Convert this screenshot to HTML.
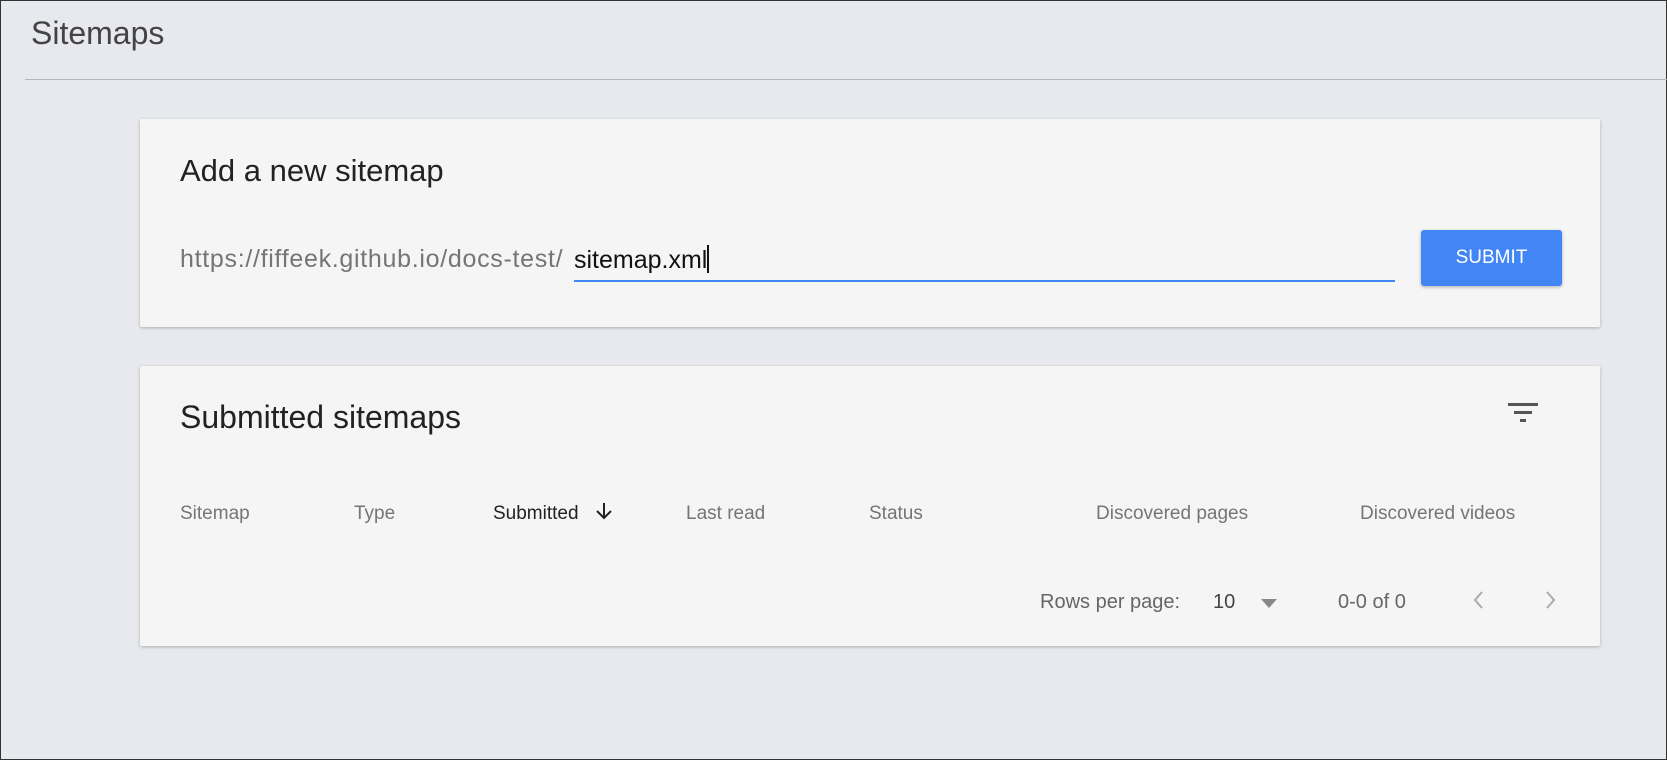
<!DOCTYPE html>
<html><head><meta charset="utf-8"><style>
*{margin:0;padding:0;box-sizing:border-box}
body{width:1667px;height:760px;overflow:hidden;background:#e7e9ee;font-family:"Liberation Sans",sans-serif;position:relative;border:1px solid #333}
.a{position:absolute;white-space:nowrap;line-height:1.15}
.card{position:absolute;left:139px;width:1460px;background:#f5f5f5;border-radius:2px;box-shadow:0 1px 3px rgba(0,0,0,.25)}
.h{color:#757575;font-size:19px;top:502px}
</style></head><body>
<div class="a" style="left:30px;top:14px;font-size:32px;color:#444">Sitemaps</div>
<div class="a" style="left:24px;top:78px;width:1643px;height:1px;background:#b8b8b8"></div>
<div class="card" style="top:118px;height:208px"></div>
<div class="a" style="left:179px;top:152px;font-size:31px;color:#222">Add a new sitemap</div>
<div class="a" style="left:179px;top:244px;font-size:25px;color:#757575;letter-spacing:0.7px">https://fiffeek.github.io/docs-test/</div>
<div class="a" style="left:573px;top:244px;font-size:25px;color:#111">sitemap.xml<span style="display:inline-block;width:1.5px;height:28px;background:#111;vertical-align:-5px"></span></div>
<div class="a" style="left:573px;top:279px;width:821px;height:2px;background:#4285f4"></div>
<div class="a" style="left:1420px;top:229px;width:141px;height:56px;background:#4285f4;border-radius:3px;box-shadow:0 1px 3px rgba(0,0,0,.3);color:#fff;font-size:19px;text-align:center;line-height:56px">SUBMIT</div>
<div class="card" style="top:365px;height:280px"></div>
<div class="a" style="left:179px;top:398px;font-size:32px;color:#222">Submitted sitemaps</div>
<svg class="a" style="left:1507px;top:401px" width="30" height="22" viewBox="0 0 30 22"><rect x="0" y="1" width="30" height="3" fill="#555"/><rect x="6" y="9" width="18" height="3" fill="#555"/><rect x="12" y="17" width="6" height="3" fill="#555"/></svg>
<div class="a h" style="left:179px">Sitemap</div>
<div class="a h" style="left:353px">Type</div>
<div class="a h" style="left:492px;color:#222">Submitted</div>
<svg class="a" style="left:594px;top:500px" width="18" height="20" viewBox="0 0 18 20"><path d="M9 2V17M2 10L9 17L16 10" stroke="#222" stroke-width="2" fill="none"/></svg>
<div class="a h" style="left:685px">Last read</div>
<div class="a h" style="left:868px">Status</div>
<div class="a h" style="left:1095px">Discovered pages</div>
<div class="a h" style="left:1359px">Discovered videos</div>
<div class="a" style="left:1039px;top:590px;font-size:20px;color:#666">Rows per page:</div>
<div class="a" style="left:1212px;top:590px;font-size:20px;color:#444">10</div>
<svg class="a" style="left:1259px;top:596px" width="18" height="12"><path d="M1 2H17L9 11Z" fill="#888"/></svg>
<div class="a" style="left:1337px;top:590px;font-size:20px;color:#666">0-0 of 0</div>
<svg class="a" style="left:1470px;top:588px" width="16" height="22"><path d="M11 3L4 11L11 19" stroke="#aaa" stroke-width="2" fill="none"/></svg>
<svg class="a" style="left:1541px;top:588px" width="16" height="22"><path d="M5 3L12 11L5 19" stroke="#aaa" stroke-width="2" fill="none"/></svg>
</body></html>
